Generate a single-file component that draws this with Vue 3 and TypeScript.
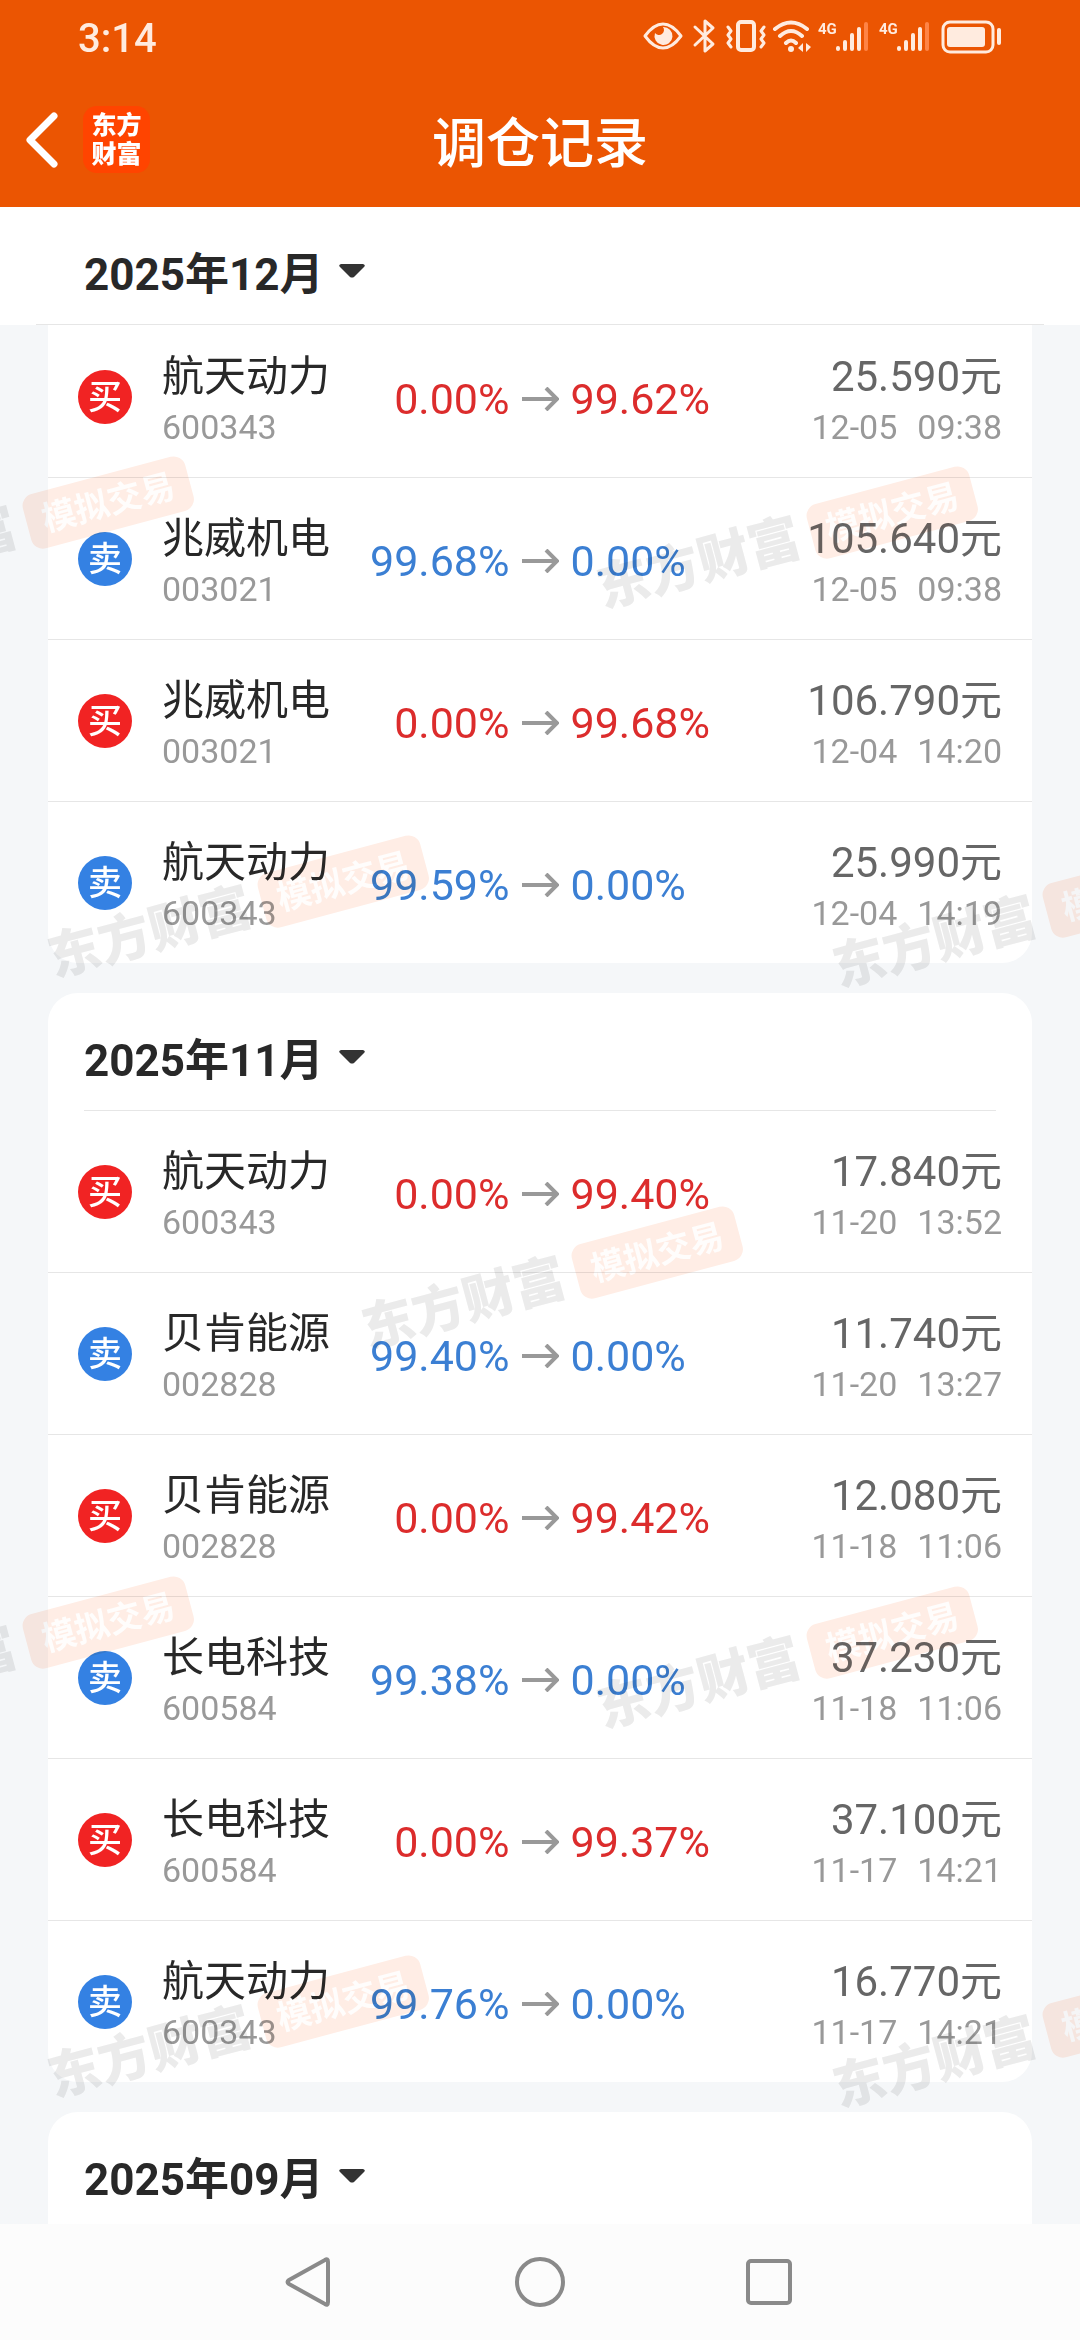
<script setup lang="ts">
interface Trade {
  side: 'buy' | 'sell'
  name: string
  code: string
  from: string
  to: string
  price: string
  date: string
  time: string
}
interface Month {
  label: string
  trades: Trade[]
}

const trade = (
  side: 'buy' | 'sell', name: string, code: string, from: string,
  to: string, price: string, date: string, time: string,
): Trade => ({ side, name, code, from, to, price, date, time })

const months: Month[] = [
  {
    label: '2025年12月',
    trades: [
      trade('buy', '航天动力', '600343', '0.00%', '99.62%', '25.590元', '12-05', '09:38'),
      trade('sell', '兆威机电', '003021', '99.68%', '0.00%', '105.640元', '12-05', '09:38'),
      trade('buy', '兆威机电', '003021', '0.00%', '99.68%', '106.790元', '12-04', '14:20'),
      trade('sell', '航天动力', '600343', '99.59%', '0.00%', '25.990元', '12-04', '14:19'),
    ],
  },
  {
    label: '2025年11月',
    trades: [
      trade('buy', '航天动力', '600343', '0.00%', '99.40%', '17.840元', '11-20', '13:52'),
      trade('sell', '贝肯能源', '002828', '99.40%', '0.00%', '11.740元', '11-20', '13:27'),
      trade('buy', '贝肯能源', '002828', '0.00%', '99.42%', '12.080元', '11-18', '11:06'),
      trade('sell', '长电科技', '600584', '99.38%', '0.00%', '37.230元', '11-18', '11:06'),
      trade('buy', '长电科技', '600584', '0.00%', '99.37%', '37.100元', '11-17', '14:21'),
      trade('sell', '航天动力', '600343', '99.76%', '0.00%', '16.770元', '11-17', '14:21'),
    ],
  },
  { label: '2025年09月', trades: [] },
]

// Centres of the watermark stamps; the pattern repeats down the page.
const patternHeight = 1120
const pattern = [
  { x: 551, y: -46 },
  { x: 2, y: 324 },
  { x: 786, y: 334 },
  { x: 237, y: 703 },
  { x: 1022, y: 713 },
]
const stamps = [0, 1].flatMap((n) =>
  pattern.map((p) => ({ left: `${p.x}px`, top: `${p.y + n * patternHeight}px` })),
)
</script>

<template>
  <div class="screen">
    <header class="top">
      <div class="status">
        <span class="clock">3:14</span>
        <svg class="status-icons" width="364" height="40" viewBox="0 0 364 40" fill="none" stroke="#ffebdf" aria-hidden="true">
          <path d="M5 20C13 9 20 8 23 8s10 1 18 12C33 31 26 32 23 32S13 31 5 20Z" stroke-width="3" stroke-linejoin="round" />
          <path d="M23 11a9 9 0 1 1-8 6a4.500 4.500 0 0 0 8-6Z" fill="#ffebdf" stroke="none" />
          <path d="M55 11l18 17-8 7V5l8 7-18 17" stroke-width="3" stroke-linejoin="round" stroke-linecap="round" />
          <rect x="98" y="6" width="16" height="28" rx="3" stroke-width="4" />
          <path d="M88 11l3 4-3 4 3 4-3 4 3 4M124 11l-3 4 3 4-3 4 3 4-3 4" stroke-width="3" stroke-linecap="round" stroke-linejoin="round" />
          <path d="M135 13Q151 0 167 13M140 20Q151 10 162 20M146 27Q151 22 156 27" stroke-width="4" stroke-linecap="round" />
          <circle cx="151" cy="33" r="3" fill="#ffebdf" stroke="none" />
          <path d="M163 27v9l-5-4zM166 27v9l5-5z" fill="#ffebdf" stroke="none" />
          <g v-for="x in [178, 239]" :key="x" :transform="`translate(${x} 0)`">
            <text class="net" x="0" y="18" fill="#ffebdf" stroke="none">4G</text>
            <path d="M20 32v1M27 26v7M34 19v14M41 13v20" stroke-width="4" stroke-linecap="round" />
            <path d="M48 8v25" stroke="#ff8446" stroke-width="4" stroke-linecap="round" />
          </g>
          <rect x="303" y="6" width="50" height="30" rx="7" stroke-width="3" />
          <rect x="307" y="11" width="38" height="20" rx="3" fill="#ffebdf" stroke="none" />
          <path d="M359 14v13" stroke-width="4" stroke-linecap="round" />
        </svg>
      </div>
      <div class="bar">
        <div class="bar-left">
          <button class="back" type="button" aria-label="返回">
            <svg width="32" height="56" viewBox="0 0 32 56" fill="none" stroke="#fff" stroke-width="7" stroke-linecap="round" stroke-linejoin="round">
              <path d="M28 4L4 28l24 24" />
            </svg>
          </button>
          <a class="logo" href="#"><span>东方</span><span>财富</span></a>
        </div>
        <h1>调仓记录</h1>
      </div>
    </header>

    <div class="body">
      <main class="scroll">
        <section v-for="(month, i) in months" :key="month.label" class="card" :class="{ pinned: i === 0 }">
          <div class="month">
            <button class="month-button" type="button">
              {{ month.label }}
              <svg width="26" height="14" viewBox="0 0 26 14" fill="#333" aria-hidden="true">
                <path d="M2 0h22q3 1 1 3l-10 10q-2 1-4 0L1 3q-2-2 1-3Z" />
              </svg>
            </button>
          </div>
          <ul v-if="month.trades.length" class="trades">
            <li v-for="(t, k) in month.trades" :key="k" class="trade" :class="t.side">
              <div class="stock">
                <span class="badge">{{ t.side === 'buy' ? '买' : '卖' }}</span>
                <div class="lines">
                  <div class="name">{{ t.name }}</div>
                  <div class="small">{{ t.code }}</div>
                </div>
              </div>
              <div class="shift">
                <span class="from">{{ t.from }}</span>
                <svg width="37" height="24" viewBox="0 0 37 24" fill="none" stroke="#999" stroke-width="4" aria-hidden="true">
                  <path d="M0 12h34M24 1l11 11-11 11" />
                </svg>
                <span>{{ t.to }}</span>
              </div>
              <div class="deal lines">
                <div class="price">{{ t.price }}</div>
                <div class="small when"><span>{{ t.date }}</span><span>{{ t.time }}</span></div>
              </div>
            </li>
          </ul>
        </section>
      </main>
      <div class="watermark" aria-hidden="true">
        <div v-for="(s, i) in stamps" :key="i" class="stamp" :style="s">
          <span class="brand">东方财富</span>
          <span class="tag">模拟交易</span>
        </div>
      </div>
    </div>

    <nav class="nav">
      <button type="button" aria-label="返回">
        <svg width="52" height="52" viewBox="0 0 52 52" fill="none" stroke="#8a8a8a" stroke-width="4" stroke-linejoin="round">
          <path d="M40 4Q43 2 43 6v40q0 4-3 2L4 28q-3-2 0-4Z" />
        </svg>
      </button>
      <button type="button" aria-label="主页">
        <svg width="52" height="52" viewBox="0 0 52 52" fill="none" stroke="#8a8a8a" stroke-width="4">
          <circle cx="26" cy="26" r="23" />
        </svg>
      </button>
      <button type="button" aria-label="最近任务">
        <svg width="52" height="52" viewBox="0 0 52 52" fill="none" stroke="#8a8a8a" stroke-width="4">
          <rect x="5" y="5" width="42" height="42" rx="3" />
        </svg>
      </button>
    </nav>
  </div>
</template>

<style>
body {
  margin: 0;
}
</style>

<style scoped>
.screen {
  display: flex;
  flex-direction: column;
  height: 100vh;
  background: #f5f7f9;
  color: #282828;
  font-family: Roboto, "Noto Sans CJK SC", sans-serif;
}
button {
  padding: 0;
  border: 0;
  background: none;
  color: inherit;
  font: inherit;
}
svg {
  display: block;
}
.top {
  background: #eb5502;
  color: #fff;
}
.status {
  display: flex;
  align-items: center;
  justify-content: space-between;
  height: 76px;
  padding: 0 76px 0 78px;
}
.clock {
  color: #ffebdf;
  font-size: 40px;
  font-weight: 500;
}
.status-icons {
  margin-bottom: 4px;
}
.net {
  font-size: 15px;
  font-weight: 700;
}
.bar {
  display: grid;
  grid-template-columns: 1fr auto 1fr;
  align-items: center;
  height: 131px;
  padding: 0 26px 4px;
  box-sizing: border-box;
}
.bar-left {
  display: flex;
  align-items: center;
  gap: 25px;
}
.logo {
  display: flex;
  flex-direction: column;
  align-items: center;
  justify-content: center;
  width: 67px;
  height: 67px;
  border-radius: 14px;
  background: #ff4400;
  color: #fff;
  font-size: 25px;
  font-weight: 900;
  line-height: 29px;
  text-decoration: none;
}
h1 {
  margin: 0;
  font-size: 54px;
  font-weight: 500;
}
.body {
  position: relative;
  flex: 1;
  min-height: 0;
}
.scroll {
  display: flex;
  flex-direction: column;
  gap: 30px;
  height: 100%;
  padding: 0 48px;
  box-sizing: border-box;
  overflow-y: auto;
  scrollbar-width: none;
}
.card {
  flex: none;
  min-height: 280px;
  border-radius: 30px;
  background: #fff;
}
.month {
  height: 118px;
  padding: 0 36px;
  box-sizing: border-box;
}
.month-button {
  display: flex;
  align-items: center;
  gap: 16px;
  width: 100%;
  height: 118px;
  padding-top: 10px;
  border-bottom: 1px solid #e6e6e6;
  font-size: 44px;
  font-weight: 700;
}
.pinned .month {
  position: sticky;
  top: 0;
  z-index: 1;
  margin: 0 -48px;
  background: #fff;
}
.pinned .month-button {
  padding-left: 48px;
}
.pinned .trades {
  margin-top: -9px;
}
.trades {
  margin: 0;
  padding: 0;
  list-style: none;
}
.trade {
  display: grid;
  grid-template-columns: 1fr auto 1fr;
  align-items: center;
  height: 161px;
  padding: 0 30px;
}
.trade + .trade {
  border-top: 1px solid #e6e6e6;
}
.stock {
  display: flex;
  align-items: center;
  gap: 30px;
}
.lines {
  padding-top: 10px;
}
.badge {
  width: 54px;
  height: 54px;
  border-radius: 50%;
  color: #fff;
  font-size: 34px;
  font-weight: 500;
  line-height: 54px;
  text-align: center;
}
.buy .badge {
  background: #f12323;
}
.sell .badge {
  background: #3481e3;
}
.name,
.price {
  font-size: 42px;
  line-height: 50px;
}
.price {
  color: #666;
}
.small {
  color: #999;
  font-size: 34px;
  line-height: 50px;
}
.shift {
  display: grid;
  grid-template-columns: 140px 37px 140px;
  align-items: center;
  gap: 12px;
  padding-top: 4px;
  font-size: 43px;
  line-height: 50px;
}
.from {
  text-align: right;
}
.buy .shift {
  color: #dc2c2c;
}
.sell .shift {
  color: #3b7fd3;
}
.deal {
  text-align: right;
}
.when {
  display: flex;
  justify-content: flex-end;
  gap: 20px;
}
.watermark {
  position: absolute;
  inset: 0;
  overflow: hidden;
  pointer-events: none;
  mix-blend-mode: multiply;
}
.stamp {
  position: absolute;
  display: flex;
  align-items: center;
  gap: 12px;
  white-space: nowrap;
  transform: translate(-50%, -50%) rotate(-15deg);
}
.brand {
  color: #ebebeb;
  font-size: 52px;
  font-weight: 900;
  line-height: 56px;
}
.tag {
  padding: 0 16px;
  border-radius: 12px;
  background: #ffede5;
  color: #fffdfc;
  font-size: 34px;
  font-weight: 700;
  line-height: 56px;
}
.nav {
  display: flex;
  align-items: center;
  justify-content: center;
  gap: 177px;
  height: 116px;
  background: #fcfcfc;
}
</style>
